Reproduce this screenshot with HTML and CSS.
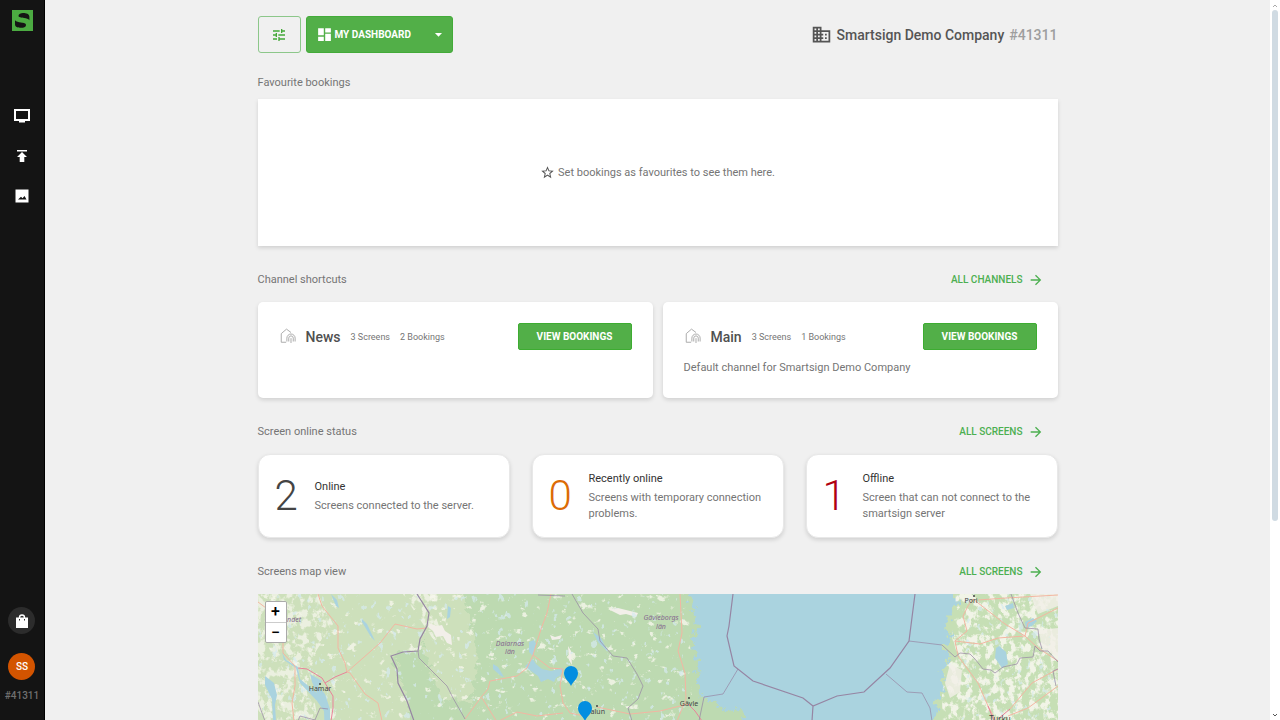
FILE: index.html
```html
<!DOCTYPE html>
<html lang="en">
<head>
<meta charset="utf-8">
<meta name="viewport" content="width=device-width, initial-scale=1">
<title>Smartsign dashboard</title>
<link rel="stylesheet" href="styles.css">
</head>
<body>
<svg class="defs" aria-hidden="true">
  <symbol id="arrow" viewBox="0 0 24 24"><path d="M4 11v2h12l-5.500 5.500 1.420 1.420L19.840 12 11.920 4.080 10.500 5.500 16 11z"/></symbol>
  <symbol id="home" viewBox="0 0 24 24"><g fill="none" stroke="currentColor" stroke-width="1.300"><path d="M9.500 19H3V7.500L10 1.500l6 4.500"/><path d="M10.500 18v-4.500a5.500 5.500 0 0 1 11 0V18M13 18v-4.500a3 3 0 0 1 6 0V18M16 20v-6.500"/></g></symbol>
</svg>
<div class="app">
  <nav class="sidebar" aria-label="Main">
    <a class="logo" href="#" aria-label="Smartsign">
      <svg viewBox="0 0 21 21"><path fill="#4cab42" d="M0 0h21v21H0z"/><path fill="#141414" d="M6.500 5.800C6.800 3.800 8.600 3 11 3c3.300 0 6.300.7 6.400 3.800v3.400c-1.100-1.300-3-1.700-5.200-2.100C9.300 7.500 6.300 7.500 6.500 5.800zM3 10.300c1.300 1.400 3.600 1.800 6 2.200 2.600.4 5.200.7 5 2.700-.2 2-2.400 2.600-4.800 2.600-3.300 0-6.200-.6-6.200-3.500z"/></svg>
    </a>
    <div class="nav-links">
      <a href="#" aria-label="Screens"><svg viewBox="0 0 16 16"><path fill-rule="evenodd" d="M0 1h16v12h-5v1.500H5V13H0zM2 3v8h12V3z"/></svg></a>
      <a href="#" aria-label="Publish"><svg viewBox="0 0 16 16"><path d="M3 2h10v1.500H3zM8 4l5 5h-2.700v5H5.700V9H3z"/></svg></a>
      <a href="#" aria-label="Media"><svg viewBox="0 0 16 16"><path fill-rule="evenodd" d="M1.500 1.500h13v13h-13zM4 11.500h8.500L10.500 8l-2 2.300L7 8.700z"/></svg></a>
    </div>
    <div class="nav-foot">
      <button class="round shop" aria-label="Shop"><svg viewBox="0 0 16 16"><path fill-rule="evenodd" d="M2 4.500h2.800a3.200 3.200 0 0 1 6.400 0H14V15H2zM6.200 4.500h3.600a1.800 1.800 0 0 0-3.600 0zM5 6v1.500h1V6zM10 6v1.500h1V6z"/></svg></button>
      <button class="round avatar">SS</button>
      <span class="account">#41311</span>
    </div>
  </nav>
  <main class="main">
    <div class="content">
      <header class="toolbar">
        <button class="btn-outline" aria-label="Dashboard settings"><svg viewBox="0 0 24 24"><path d="M3 17v2h6v-2H3zM3 5v2h10V5H3zm10 16v-2h8v-2h-8v-2h-2v6h2zM7 9v2H3v2h4v2h2V9H7zm14 4v-2H11v2h10zm-6-4h2V7h4V5h-4V3h-2v6z"/></svg></button>
        <button class="btn-dashboard" aria-haspopup="menu">
          <svg viewBox="0 0 24 24"><path d="M3 13h8V3H3v10zm0 8h8v-6H3v6zm10 0h8V11h-8v10zm0-18v6h8V3h-8z"/></svg>
          <span>MY DASHBOARD</span>
          <svg class="caret" viewBox="0 0 24 24"><path d="M7 10l5 5 5-5z"/></svg>
        </button>
        <div class="company">
          <svg viewBox="0 0 24 24"><path d="M18,15H16V17H18M18,11H16V13H18M20,19H12V17H14V15H12V13H14V11H12V9H20M10,7H8V5H10M10,11H8V9H10M10,15H8V13H10M10,19H8V17H10M6,7H4V5H6M6,11H4V9H6M6,15H4V13H6M6,19H4V17H6M12,7V3H2V21H22V7H12Z"/></svg>
          <span>Smartsign Demo Company</span><span class="company-id">#41311</span>
        </div>
      </header>

      <section>
        <div class="head"><h2>Favourite bookings</h2></div>
        <div class="empty">
          <svg viewBox="0 0 24 24"><path d="M12,15.390L8.240,17.660L9.230,13.380L5.910,10.500L10.290,10.130L12,6.090L13.710,10.130L18.090,10.500L14.770,13.380L15.760,17.660M22,9.240L14.810,8.630L12,2L9.190,8.630L2,9.240L7.450,13.970L5.820,21L12,17.270L18.180,21L16.540,13.970L22,9.240Z"/></svg>
          <span>Set bookings as favourites to see them here.</span>
        </div>
      </section>

      <section>
        <div class="head"><h2>Channel shortcuts</h2><a href="#">ALL CHANNELS<svg><use href="#arrow"/></svg></a></div>
        <div class="channels">
          <article class="channel">
            <div class="channel-row"><svg><use href="#home"/></svg><h3>News</h3><span>3 Screens</span><span>2 Bookings</span><button>VIEW BOOKINGS</button></div>
          </article>
          <article class="channel">
            <div class="channel-row"><svg><use href="#home"/></svg><h3>Main</h3><span>3 Screens</span><span>1 Bookings</span><button>VIEW BOOKINGS</button></div>
            <p>Default channel for Smartsign Demo Company</p>
          </article>
        </div>
      </section>

      <section>
        <div class="head"><h2>Screen online status</h2><a href="#">ALL SCREENS<svg><use href="#arrow"/></svg></a></div>
        <div class="statuses">
          <article class="status"><strong>2</strong><div><h3>Online</h3><p>Screens connected to the server.</p></div></article>
          <article class="status recent"><strong>0</strong><div><h3>Recently online</h3><p>Screens with temporary connection problems.</p></div></article>
          <article class="status offline"><strong>1</strong><div><h3>Offline</h3><p>Screen that can not connect to the smartsign server</p></div></article>
        </div>
      </section>

      <section>
        <div class="head"><h2>Screens map view</h2><a href="#">ALL SCREENS<svg><use href="#arrow"/></svg></a></div>
        <div class="map">
          <svg class="map-art" viewBox="0 0 800 300" role="img" aria-label="Map of screens">
            <defs>
              <filter id="clearings" x="0" y="0" width="100%" height="100%"><feTurbulence type="fractalNoise" baseFrequency=".1 .12" numOctaves="5" seed="8"/><feColorMatrix values="0 0 0 0 .93 0 0 0 0 .93 0 0 0 0 .84 9 0 0 0 -6"/><feComposite in2="SourceGraphic" operator="in"/></filter>
              <filter id="farmland" x="0" y="0" width="100%" height="100%"><feTurbulence type="fractalNoise" baseFrequency=".14 .12" numOctaves="5" seed="3"/><feColorMatrix values="0 0 0 0 .95 0 0 0 0 .94 0 0 0 0 .87 7 0 0 0 -3.300"/><feComposite in2="SourceGraphic" operator="in"/></filter>
              <filter id="lakes" x="0" y="0" width="100%" height="100%"><feTurbulence type="fractalNoise" baseFrequency=".15 .11" numOctaves="3" seed="21"/><feColorMatrix values="0 0 0 0 .67 0 0 0 0 .83 0 0 0 0 .87 14 0 0 0 -9.400"/><feComposite in2="SourceGraphic" operator="in"/></filter>
              <filter id="shore" x="-5%" y="-5%" width="110%" height="110%"><feTurbulence type="fractalNoise" baseFrequency=".16" numOctaves="3" seed="5"/><feDisplacementMap in="SourceGraphic" scale="16" xChannelSelector="R" yChannelSelector="G"/></filter>
            </defs>
            <path fill="#aad3df" d="M0 0h800v300H0z"/>
            <g filter="url(#shore)">
              <path fill="#bddab1" d="M-20-20H428L434 12 439 32 435 52 439 69 440 92 444 104 460 109 464 117 482 114 485 124 492 130 470 320H-20z"/>
              <path fill="#c6dfb5" d="M690-20L699 5 695 19 687 32 694 44 685 54 692 64 684 75 687 92 679 105 677 127 690 320H820V-20z"/>
            </g>
            <g filter="url(#shore)"><path fill="#e0e7c7" opacity=".45" d="M-20-20h179l12 39-2 13-9 25-27 5 6 13 10 32 7 40H-20zM164-20h38l12 60 6 20-8 50-30-8-18-50z"/></g>
            <path fill="#000" opacity=".8" filter="url(#clearings)" d="M0 0H430L434 100 440 300H210L161 64 160 57 133 62 156 127V300H0z"/>
            <path fill="#000" opacity=".7" filter="url(#farmland)" d="M0 0H60L75 30 50 70 60 127H0zM145 0h40l-8 20 10 30-12-5z"/>
            <path fill="#000" opacity=".85" filter="url(#farmland)" d="M698 0H800V300H688L684 100 688 72 700 62 694 44z"/>
            <path fill="#f2efe9" opacity=".8" d="M772 0h28v12l-20 8zM781 36l19-2v28l-16-6zM692 70l12 6-2 22-10 6-5-15z"/>
            <path fill="#f2efe9" d="M171 29l8 3 5-1 3 6 6 4 1 10-5-2-4-7-7 1-3-6-5-4zM292 41l5 2 7-2-2 4-8 1zM310 52l3 5 1 14-3-5zM350 15l10-1 8 2 12 3-2 4-10-3-6 1z"/>
            <path fill="#000" opacity=".7" filter="url(#lakes)" d="M0 0H430V300H0zM705 0H800V300H690z"/>
            <g fill="#aad3df">
              <path d="M24 58l4 8 12 7 2 12 17 14-5-11-2-8 12 7-4 5 7 8 5 15v30h-5l-1-28-7-10-17-18-4-15-12-8zM271 48l5-2 2 4-3 12-4-4zM275 65l3 5 6 5 9 2 12-3-2 7-5 3-2 4-6-3-7 3-3-6-7-5-6-5zM235 70l5 3 6 10-3-1-8-7zM741 52l7 6 2 12-6 4-7-10 1-10zM747 12l8-3 1 5-7 2zM768 34l-1-6 8-4 4 3-5 5z"/>
              <path d="M104 25l5 5 8 17-4-4-9-15zM73 0l6 6 2 8-3-2zM7 82l9 7 3 12-2 10 1 16h-3l-1-22-7-14zM190 12l3 2-1 9-3 2zM335 38l8 6 7 14-10-10z"/>
            </g>
            <g class="road">
              <path d="M60 0l4 12 16 20v22l7 15 2 9 16-14 17-15 15-19 22 5 10-1M89 78l3 1 15 21 13 9 4 18M25 47v12l12 13v20l-3 17 2 18M0 8l12 9 13 30M293 0l-4 19-6 16-8 26-6 13-10 8-27 5-2 8-6 7-17 23M275 61l17 13 13 1-3 17 3 17 7 10 14 3M224 104l10 16 5 8 20-10 20 4 26-3M339 113l33 7 30-3 28-7M422 0l2 39-4 18 7 22 1 26-9 22"/>
              <path d="M715 5l32 25 20 12 13 12 20 13M715 5l-5 7-5 10 4 15-12 10 3 15 20 27 10 23 8 15M697 47l25 3 18-6 27-2 3-13 30-15M720 6l28-2 52-3M750 122l20-8 30-22M752 115l22-26 26-14"/>
            </g>
            <path class="road major" d="M40 74l9 1 15 9 3 5 8 13v12l-2 13M67 89l10-6 12-5M430 110l7 7 7 10M730 112l6 15M752 115l-12 10"/>
            <g class="border thin">
              <path d="M160 57l1 7 18 18 10 10 6 12 12 21M314 0l11 19 15 16 2 12 13 15 14 2 10 16 6 12-5 13-10 9 4 13M280 1l27 1M0 108l7 19M40 127l2-5 15 4 5-12 8 1"/>
              <path d="M480 75l-15 25-19 3-5 24M628 80l21 18 15 1 8 15 2 13M651 47l33 4 13 12 5-4 10 1 5 5 8 10 8 1 4 3 8-6 14-3 3-6 13-1 2-11 5 5 8 0 10 11M753 0l7 19 7 15 13 1 1 10 3 10M800 75l-5 2 3 15"/>
            </g>
            <path class="border" d="M159 0l12 19-2 13-7 13-2 12-15 1-12 4 6 13 1 14 9 18 7 20M475 0l-4 32-2 10 7 30 19 15 50 17 10 8 24-10 27-4 26-24 19-27 6-47M555 112l-1 15"/>
            <g class="place">
              <circle cx="62" cy="90" r="1"/><circle cx="339" cy="112" r="1"/><circle cx="431" cy="104" r="1"/><circle cx="716" cy="2" r="1"/>
              <text x="62" y="97">Hamar</text><text x="338" y="120">Falun</text><text x="431" y="112">Gävle</text><text x="713" y="9">Pori</text><text class="city" x="742" y="128">Turku</text>
            </g>
            <g class="region"><text x="28" y="28">Innlandet</text><text x="252" y="52">Dalarnas</text><text x="252" y="60">län</text><text x="403" y="26">Gävleborgs</text><text x="403" y="35">län</text></g>
            <g class="pin"><path d="M313 92c-2-5-7-7-7-13a7 7 0 0 1 14 0c0 6-5 8-7 13zM327 127c-2-5-7-7-7-13a7 7 0 0 1 14 0c0 6-5 8-7 13z"/></g>
          </svg>
          <div class="zoom"><button aria-label="Zoom in">+</button><button aria-label="Zoom out">−</button></div>
        </div>
      </section>
    </div>
  </main>
  <div class="scroll" aria-hidden="true">
    <svg viewBox="0 0 10 10"><path d="M3 7l2-2 2 2" stroke="#aaa"/></svg>
    <div class="track"><div class="thumb"></div></div>
    <svg viewBox="0 0 10 10"><path d="M3 4l2 2 2-2" stroke="#555"/></svg>
  </div>
</div>
</body>
</html>
```
FILE: styles.css
```css
* { box-sizing: border-box; }
body { margin: 0; background: #f0f0f0; color: #757575; font: 11px/16px Roboto, "Liberation Sans", sans-serif; }
h2, h3, p { margin: 0; font-weight: 400; }
h2 { font-size: 11px; }
a { color: inherit; text-decoration: none; }
button { font: inherit; padding: 0; border: 0; cursor: pointer; }
svg { display: block; fill: currentColor; flex: none; }
.defs { position: absolute; width: 0; height: 0; }

.app { display: flex; height: 100vh; overflow: hidden; }

.sidebar { width: 45px; flex: none; display: flex; flex-direction: column; align-items: center; padding: 10px 0 16px; background: #141414; border-right: 1px solid #000; color: #fff; }
.logo svg { width: 21px; height: 21px; }
.nav-links { display: flex; flex-direction: column; gap: 24px; margin-top: 77px; }
.nav-links svg { width: 16px; height: 16px; }
.nav-foot { display: flex; flex-direction: column; align-items: center; margin-top: auto; }
.round { display: grid; place-items: center; width: 27px; height: 27px; border-radius: 50%; color: #fff; }
.shop { background: #2c2c2c; margin-bottom: 19px; }
.shop svg { width: 16px; height: 16px; }
.avatar { background: #d35400; font-size: 10px; font-weight: 500; margin-bottom: 8px; }
.account { color: #707070; font-size: 10px; font-weight: 500; }

.main { flex: 1; min-width: 0; overflow: hidden; }
.content { max-width: 800px; margin: 0 auto; padding-top: 16px; }

.toolbar { display: flex; align-items: center; gap: 5px; height: 37px; margin-bottom: 18px; }
.btn-outline { display: grid; place-items: center; width: 43px; height: 37px; border: 1px solid #8cc78a; border-radius: 3px; background: transparent; color: #43a838; }
.btn-outline svg { width: 16px; height: 16px; }
.btn-dashboard { display: flex; align-items: center; gap: 2px; width: 147px; height: 37px; padding: 0 5px 0 9px; border: 1px solid #43ab39; border-radius: 3px; background: #52af48; color: #fff; font-size: 10px; font-weight: 700; }
.btn-dashboard svg { width: 17px; height: 17px; }
.btn-dashboard .caret { margin-left: auto; }
.company { display: flex; align-items: center; gap: 5px; margin-left: auto; color: #555; font-size: 14px; font-weight: 500; }
.company svg { width: 21px; height: 21px; }
.company-id { color: #9e9e9e; }

.head { display: flex; align-items: center; justify-content: space-between; height: 24px; }
.head a { display: flex; align-items: center; gap: 5px; padding-right: 14px; color: #4caf50; font-size: 10px; font-weight: 500; }
.head svg { width: 16px; height: 16px; }

.empty { display: flex; align-items: center; justify-content: center; gap: 3px; height: 147px; margin: 4px 0 22px; background: #fff; box-shadow: 0 2px 4px #0002; }
.empty svg { width: 15px; height: 15px; color: #555; }

.channels { display: grid; grid-template-columns: 1fr 1fr; gap: 10px; margin: 10px 0 22px; }
.channel { min-height: 96px; padding: 21px; border-radius: 5px; background: #fff; box-shadow: 0 2px 4px #0002; }
.channel-row { display: flex; align-items: center; gap: 10px; height: 27px; font-size: 9px; }
.channel-row svg { width: 18px; height: 18px; color: #aaa; margin-right: -1px; }
.channel-row h3 { color: #505050; font-size: 14px; font-weight: 500; }
.channel-row button { width: 114px; height: 27px; margin-left: auto; border: 1px solid #3dac31; border-radius: 2px; background: #52af48; color: #fff; font-size: 10px; font-weight: 700; }
.channel p { margin-top: 10px; }

.statuses { display: grid; grid-template-columns: repeat(3, 1fr); gap: 22px; margin: 10px 0 22px; }
.status { display: flex; align-items: center; min-height: 84px; padding: 0 12px 0 16px; border: 1px solid #e8e8e8; border-radius: 12px; background: #fff; box-shadow: 0 2px 4px #0002; }
.status strong { width: 40px; flex: none; color: #444; font-size: 42px; line-height: 48px; font-weight: 300; }
.status h3 { margin-bottom: 3px; color: #333; font-size: 11px; }
.recent strong { color: #dc6b05; }
.offline strong { color: #b00010; }

.map { position: relative; margin-top: 10px; }
.map-art { width: 100%; height: auto; }
.road { fill: none; stroke: #f3b6a2; stroke-width: 1; }
.major { stroke: #e98399; }
.border { fill: none; stroke: #9685a3; stroke-width: 1.200; }
.thin { stroke-width: .7; }
.map-art text { font-family: "Noto Sans", sans-serif; font-size: 7px; text-anchor: middle; }
.place { fill: #444; }
.map-art .city { font-size: 8px; }
.region { fill: #85698e; font-style: italic; }
.pin { fill: #028ee0; }
.zoom { position: absolute; left: 7px; top: 7px; display: grid; border: 1px solid #aaa; border-radius: 2px; overflow: hidden; }
.zoom button { width: 20px; height: 20px; background: #fff; color: #000; font-size: 16px; font-weight: 500; line-height: 20px; }
.zoom button + button { border-top: 1px solid #ccc; }

.scroll { display: flex; flex-direction: column; width: 10px; flex: none; background: #fff; }
.scroll svg { width: 10px; height: 10px; fill: none; }
.track { flex: 1; padding: 0 2px; }
.thumb { height: 73%; border-radius: 3px; background: #d0dbe3; }
```
